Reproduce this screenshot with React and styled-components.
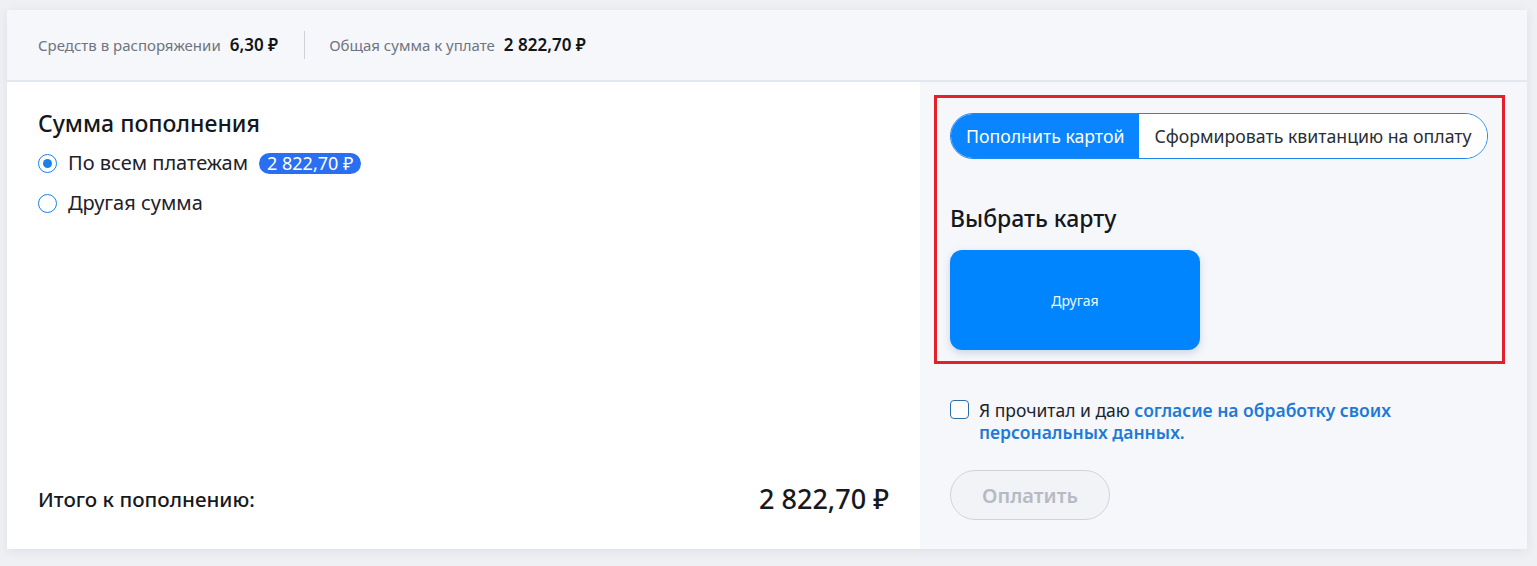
import React, { useState } from "react";
import styled, { createGlobalStyle } from "styled-components";

const GlobalStyle = createGlobalStyle`
  html, body {
    margin: 0;
    padding: 0;
    background: #eef0f4;
    font-family: "Noto Sans", "Open Sans", sans-serif;
    color: #1d2129;
  }
`;

const Page = styled.div`
  padding: 10px 10px 16px 7px;
`;

const Card = styled.div`
  background: #ffffff;
  box-shadow: 0 2px 10px rgba(30, 40, 70, 0.08);
  display: flex;
  flex-direction: column;
`;

const Header = styled.div`
  height: 70px;
  background: #f6f7fb;
  border-bottom: 2px solid #e3e7ee;
  display: flex;
  align-items: center;
  padding-left: 31px;
`;

const Stat = styled.div`
  display: flex;
  align-items: baseline;
  gap: 9px;
  padding-right: ${(p) => (p.first ? "26px" : "0")};
  margin-right: ${(p) => (p.first ? "24px" : "0")};
  border-right: ${(p) => (p.first ? "1px solid #cdd2da" : "none")};
  line-height: 28px;
`;

const StatLabel = styled.span`
  font-size: 15px;
  color: #6e7480;
`;

const StatValue = styled.span`
  font-size: 17px;
  font-weight: 600;
  color: #111418;
`;

const Body = styled.div`
  display: grid;
  grid-template-columns: 913px 1fr;
  height: 467px;
`;

const Left = styled.div`
  padding: 26px 31px 32px 31px;
  display: flex;
  flex-direction: column;
`;

const Title = styled.h2`
  margin: 0;
  font-size: 23px;
  font-weight: 500;
  line-height: 30px;
  color: #14171c;
`;

const Options = styled.div`
  display: flex;
  flex-direction: column;
  gap: 12px;
  margin-top: 11px;
`;

const Option = styled.label`
  display: flex;
  align-items: center;
  gap: 11px;
  font-size: 20px;
  line-height: 28px;
  color: #1d2129;
`;

const Radio = styled.span`
  width: 19px;
  height: 19px;
  box-sizing: border-box;
  border-radius: 50%;
  border: 1.5px solid #1a82e6;
  background: #fff;
  display: flex;
  align-items: center;
  justify-content: center;

  &::after {
    content: "";
    width: 9px;
    height: 9px;
    border-radius: 50%;
    background: ${(p) => (p.checked ? "#1a82e6" : "transparent")};
  }
`;

const Badge = styled.span`
  background: #2a6ef2;
  color: #fff;
  font-size: 18px;
  line-height: 21px;
  padding: 0 8px;
  border-radius: 11px;
`;

const Total = styled.div`
  margin-top: auto;
  display: flex;
  justify-content: space-between;
  align-items: center;
`;

const TotalLabel = styled.span`
  font-size: 20.6px;
  font-weight: 500;
  color: #16191e;
`;

const TotalValue = styled.span`
  font-size: 27px;
  font-weight: 500;
  color: #16191e;
`;

const Right = styled.div`
  background: #f6f7fb;
  padding: 13px 22px 0 14px;
  display: flex;
  flex-direction: column;
`;

const Highlight = styled.div`
  border: 3px solid #e4202a;
  padding: 15px 13px 11px 13px;
  display: flex;
  flex-direction: column;
`;

const Toggle = styled.div`
  display: flex;
  align-self: flex-start;
  border: 1px solid #1f86ea;
  border-radius: 24px;
  overflow: hidden;
  background: #fff;
`;

const ToggleItem = styled.button`
  flex: none;
  white-space: nowrap;
  border: none;
  font-family: inherit;
  font-size: 17.7px;
  height: 44px;
  padding: 0 15px;
  background: ${(p) => (p.active ? "#0a84ff" : "#ffffff")};
  color: ${(p) => (p.active ? "#ffffff" : "#2a2e35")};
  cursor: pointer;
`;

const SubTitle = styled(Title).attrs({ as: "h3" })`
  margin-top: 44px;
`;

const PayCard = styled.div`
  margin-top: 17px;
  width: 250px;
  height: 100px;
  border-radius: 12px;
  background: #0085ff;
  box-shadow: 0 3px 8px rgba(0, 60, 130, 0.18);
  color: #eef7ff;
  font-size: 14px;
  display: flex;
  align-items: center;
  justify-content: center;
`;

const Consent = styled.label`
  margin-top: 35px;
  padding-left: 16px;
  display: flex;
  gap: 10px;
  align-items: flex-start;
  font-size: 17.5px;
  line-height: 22px;
  color: #20242a;
  max-width: 460px;
`;

const Check = styled.span`
  flex: none;
  width: 19px;
  height: 19px;
  box-sizing: border-box;
  border: 1.5px solid #2a6fa8;
  border-radius: 4px;
  background: #fff;
  margin-top: 1px;
`;

const ConsentText = styled.span`
  display: block;
`;

const LinkText = styled.a`
  color: #1e7ad8;
  font-weight: 600;
  text-decoration: none;
`;

const PayButton = styled.button`
  margin: 27px 0 0 16px;
  width: 160px;
  height: 50px;
  border-radius: 25px;
  border: 1px solid #cfd4dc;
  background: #f1f3f6;
  color: #b5bac3;
  font-family: inherit;
  font-size: 20px;
  font-weight: 600;
`;

export default function App() {
  const [mode, setMode] = useState("card");
  const [sum, setSum] = useState("all");

  return (
    <Page>
      <GlobalStyle />
      <Card>
        <Header>
          <Stat first>
            <StatLabel>Средств в распоряжении</StatLabel>
            <StatValue>6,30 ₽</StatValue>
          </Stat>
          <Stat>
            <StatLabel>Общая сумма к уплате</StatLabel>
            <StatValue>2 822,70 ₽</StatValue>
          </Stat>
        </Header>
        <Body>
          <Left>
            <Title>Сумма пополнения</Title>
            <Options>
              <Option onClick={() => setSum("all")}>
                <Radio checked={sum === "all"} />
                По всем платежам
                <Badge>2 822,70 ₽</Badge>
              </Option>
              <Option onClick={() => setSum("other")}>
                <Radio checked={sum === "other"} />
                Другая сумма
              </Option>
            </Options>
            <Total>
              <TotalLabel>Итого к пополнению:</TotalLabel>
              <TotalValue>2 822,70 ₽</TotalValue>
            </Total>
          </Left>
          <Right>
            <Highlight>
              <Toggle>
                <ToggleItem active={mode === "card"} onClick={() => setMode("card")}>
                  Пополнить картой
                </ToggleItem>
                <ToggleItem active={mode === "bill"} onClick={() => setMode("bill")}>
                  Сформировать квитанцию на оплату
                </ToggleItem>
              </Toggle>
              <SubTitle>Выбрать карту</SubTitle>
              <PayCard>Другая</PayCard>
            </Highlight>
            <Consent>
              <Check />
              <ConsentText>
                Я прочитал и даю{" "}
                <LinkText href="#">согласие на обработку своих персональных данных.</LinkText>
              </ConsentText>
            </Consent>
            <PayButton disabled>Оплатить</PayButton>
          </Right>
        </Body>
      </Card>
    </Page>
  );
}
